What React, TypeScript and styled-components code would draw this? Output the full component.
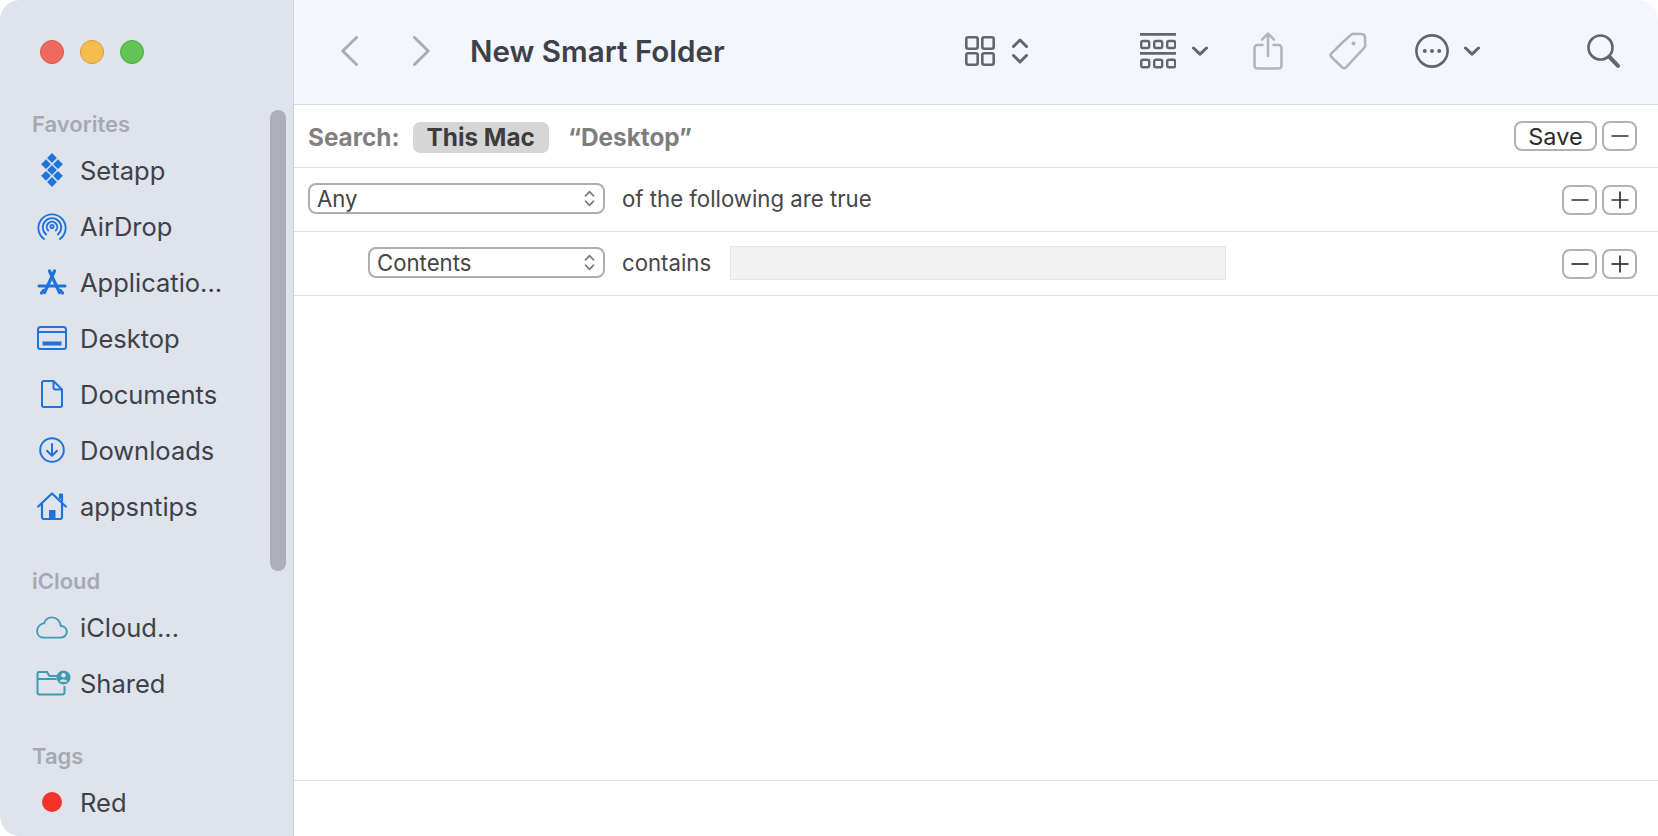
import React from 'react';
import styled, { createGlobalStyle } from 'styled-components';

const GlobalStyle = createGlobalStyle`
  html, body {
    margin: 0;
    padding: 0;
    height: 100%;
    background: #ffffff;
    overflow: hidden;
  }
  #root {
    height: 100%;
  }
`;

const BLUE = '#1f74dc';
const TEAL = '#3e9bb2';
const DARK = '#63666d';
const MUTED = '#b1b4bb';

const Chevron = ({ dir, color = DARK, width = 3 }: { dir: 'left' | 'right' | 'down'; color?: string; width?: number }) => {
  if (dir === 'down') {
    return (
      <svg width="16" height="10" viewBox="0 0 16 10" fill="none">
        <path d="M1.5 2 L8 8.2 L14.5 2" stroke={color} strokeWidth={width} strokeLinecap="round" strokeLinejoin="round" />
      </svg>
    );
  }
  return (
    <svg width="17" height="30" viewBox="0 0 17 30" fill="none">
      <path d={dir === 'left' ? 'M15.5 1.5 L1.8 15 L15.5 28.5' : 'M1.5 1.5 L15.2 15 L1.5 28.5'} stroke={color} strokeWidth={width} strokeLinecap="round" strokeLinejoin="round" />
    </svg>
  );
};

const GridIcon = () => (
  <svg width="30" height="30" viewBox="0 0 30 30" fill="none" stroke={DARK} strokeWidth="2.6">
    <rect x="1.3" y="1.3" width="11.4" height="11.4" rx="2" />
    <rect x="17.3" y="1.3" width="11.4" height="11.4" rx="2" />
    <rect x="1.3" y="17.3" width="11.4" height="11.4" rx="2" />
    <rect x="17.3" y="17.3" width="11.4" height="11.4" rx="2" />
  </svg>
);

const UpDownIcon = () => (
  <svg width="16" height="26" viewBox="0 0 16 26" fill="none" stroke={DARK} strokeWidth="3" strokeLinecap="round" strokeLinejoin="round">
    <path d="M1.5 8.5 L8 2 L14.5 8.5" />
    <path d="M1.5 17.5 L8 24 L14.5 17.5" />
  </svg>
);

const GroupIcon = () => (
  <svg width="36" height="36" viewBox="0 0 36 36" fill="none" stroke={DARK}>
    <path d="M0 1.4 H36 M0 20.4 H36" strokeWidth="2.6" />
    {[0, 13, 26].map((x) => (
      <React.Fragment key={x}>
        <rect x={x + 1.2} y="8" width="8" height="7" rx="1.8" strokeWidth="2.4" />
        <rect x={x + 1.2} y="26.8" width="8" height="7.4" rx="1.8" strokeWidth="2.4" />
      </React.Fragment>
    ))}
  </svg>
);

const ShareIcon = () => (
  <svg width="30" height="38" viewBox="0 0 30 38" fill="none" stroke={MUTED} strokeWidth="2.6" strokeLinecap="round" strokeLinejoin="round">
    <path d="M9.5 13 H4.5 A3 3 0 0 0 1.5 16 V33.5 A3 3 0 0 0 4.5 36.5 H25.5 A3 3 0 0 0 28.5 33.5 V16 A3 3 0 0 0 25.5 13 H20.5" />
    <path d="M15 24 V2 M9.2 7.5 L15 1.6 L20.8 7.5" />
  </svg>
);

const TagIcon = () => (
  <svg width="38" height="38" viewBox="0 0 38 38" fill="none" stroke={MUTED} strokeWidth="2.6" strokeLinejoin="round">
    <path d="M14 10 L22.5 2.6 A3 3 0 0 1 24.5 1.8 L32.5 2 A3.5 3.5 0 0 1 36 5.5 L36.2 13.5 A3 3 0 0 1 35.4 15.6 L17 35.4 A2.6 2.6 0 0 1 13.3 35.5 L2.5 25 A2.6 2.6 0 0 1 2.5 21.4 Z" />
    <circle cx="24.5" cy="11.5" r="2" fill={MUTED} stroke="none" />
  </svg>
);

const MoreIcon = () => (
  <svg width="34" height="34" viewBox="0 0 34 34" fill="none">
    <circle cx="17" cy="17" r="15.6" stroke={DARK} strokeWidth="2.6" />
    <circle cx="9.8" cy="17" r="2" fill={DARK} />
    <circle cx="17" cy="17" r="2" fill={DARK} />
    <circle cx="24.2" cy="17" r="2" fill={DARK} />
  </svg>
);

const SearchIcon = () => (
  <svg width="33" height="34" viewBox="0 0 33 34" fill="none" stroke={DARK} strokeLinecap="round">
    <circle cx="13.5" cy="13.5" r="12" strokeWidth="2.7" />
    <path d="M22.5 23 L31 31.8" strokeWidth="4" />
  </svg>
);

const SetappIcon = () => (
  <svg width="24" height="34" viewBox="0 0 24 34" fill={BLUE}>
    {[
      [12, 5],
      [6, 11.2],
      [18, 11.2],
      [12, 17],
      [6, 22.8],
      [18, 22.8],
      [12, 29],
    ].map(([x, y]) => (
      <path key={`${x}-${y}`} d={`M${x} ${y - 4.9} L${x + 4.9} ${y} L${x} ${y + 4.9} L${x - 4.9} ${y} Z`} />
    ))}
  </svg>
);

const AirDropIcon = () => (
  <svg width="30" height="30" viewBox="0 0 30 30" fill="none" stroke={BLUE} strokeWidth="1.9" strokeLinecap="round">
    <path d="M7 28 A13.6 13.6 0 1 1 23 28" />
    <path d="M9.2 23.5 A9.2 9.2 0 1 1 20.8 23.5" />
    <path d="M11.2 19.5 A5.2 5.2 0 1 1 18.8 19.5" />
    <circle cx="15" cy="15.5" r="1.6" />
  </svg>
);

const AppsIcon = () => (
  <svg width="30" height="26" viewBox="0 0 30 26" fill="none" stroke={BLUE} strokeWidth="3.2" strokeLinecap="round">
    <path d="M12.5 2 L22.5 23.5" />
    <path d="M17.5 2 L7.5 23.5" />
    <path d="M2 17 H28" strokeWidth="3" />
    <path d="M4.5 24 L6.5 21.5" />
    <path d="M25.5 24 L23.5 21.5" />
  </svg>
);

const DesktopIcon = () => (
  <svg width="30" height="24" viewBox="0 0 30 24" fill="none" stroke={BLUE} strokeWidth="2">
    <rect x="1" y="1" width="28" height="22" rx="2.5" />
    <path d="M1 6 H29" />
    <rect x="5.5" y="15.5" width="19" height="4" fill={BLUE} stroke="none" />
  </svg>
);

const DocumentIcon = () => (
  <svg width="22" height="28" viewBox="0 0 22 28" fill="none" stroke={BLUE} strokeWidth="2" strokeLinejoin="round">
    <path d="M3 1 H12.5 L21 9.5 V25 A2 2 0 0 1 19 27 H3 A2 2 0 0 1 1 25 V3 A2 2 0 0 1 3 1 Z" />
    <path d="M12.5 1 V7.5 A2 2 0 0 0 14.5 9.5 H21" />
  </svg>
);

const DownloadIcon = () => (
  <svg width="26" height="26" viewBox="0 0 26 26" fill="none" stroke={BLUE} strokeWidth="2" strokeLinecap="round" strokeLinejoin="round">
    <circle cx="13" cy="13" r="11.8" />
    <path d="M13 7 V18.5 M8 13.8 L13 18.8 L18 13.8" />
  </svg>
);

const HomeIcon = () => (
  <svg width="30" height="28" viewBox="0 0 30 28" fill="none" stroke={BLUE} strokeWidth="2.2" strokeLinecap="round" strokeLinejoin="round">
    <path d="M1.2 14.5 L15 1.5 L28.8 14.5" />
    <path d="M23 6 V2.5 H25 V9" />
    <path d="M5 11.5 V25 A2 2 0 0 0 7 27 H23 A2 2 0 0 0 25 25 V11.5" />
    <rect x="12" y="18" width="6.5" height="9" fill={BLUE} stroke="none" />
  </svg>
);

const CloudIcon = () => (
  <svg width="32" height="23" viewBox="0 0 34 24" fill="none" stroke={TEAL} strokeWidth="2" strokeLinejoin="round">
    <path d="M8.5 22.8 H25.5 C29.8 22.8 32.8 20 32.8 16.5 C32.8 13 30 10.4 26.4 10.4 C25.4 5 21.8 1.2 16.8 1.2 C12.8 1.2 10 3.6 8.8 7.2 C4.6 8.2 1.2 11.6 1.2 15.6 C1.2 19.8 4.2 22.8 8.5 22.8 Z" />
  </svg>
);

const SharedIcon = () => (
  <svg width="38" height="26" viewBox="-3.5 0 38 26" fill="none" stroke={TEAL} strokeWidth="2">
    <path d="M22 6 H13 L10.5 2 H3 A2 2 0 0 0 1 4 V22.5 A2 2 0 0 0 3 24.5 H26 A2 2 0 0 0 28 22.5 V16" />
    <path d="M1 9 H20" />
    <circle cx="27" cy="7.5" r="7" fill={TEAL} stroke="none" />
    <circle cx="27" cy="5.3" r="2.2" fill="#dfe3eb" stroke="none" />
    <path d="M23 11.8 A4.2 3.6 0 0 1 31 11.8 Z" fill="#dfe3eb" stroke="none" />
  </svg>
);

const SelectArrows = () => (
  <svg width="11" height="17" viewBox="0 0 11 17" fill="none" stroke="#7d7d7d" strokeWidth="1.8" strokeLinecap="round" strokeLinejoin="round">
    <path d="M1.5 5.8 L5.5 1.6 L9.5 5.8" />
    <path d="M1.5 11.2 L5.5 15.4 L9.5 11.2" />
  </svg>
);

const Window = styled.div`
  display: flex;
  height: 836px;
  width: 1658px;
  font-family: Inter, 'Noto Sans', 'Liberation Sans', sans-serif;
  background: #ffffff;
  border-radius: 20px;
  overflow: hidden;
`;

const Sidebar = styled.aside`
  position: relative;
  box-sizing: border-box;
  width: 294px;
  flex: none;
  padding: 0 0 0 32px;
  background: #dfe3eb;
  border-right: 1px solid #cfd2d9;
`;

const TrafficLights = styled.div`
  display: flex;
  gap: 16px;
  padding: 40px 0 0 8px;
  margin-bottom: 47px;
`;

const Light = styled.span<{ $fill: string; $edge: string }>`
  box-sizing: border-box;
  width: 24px;
  height: 24px;
  border-radius: 50%;
  background: ${(p) => p.$fill};
  border: 1px solid ${(p) => p.$edge};
`;

const SectionTitle = styled.div<{ $gap?: number }>`
  height: 26px;
  line-height: 26px;
  margin-top: ${(p) => p.$gap ?? 0}px;
  margin-bottom: 5px;
  font-size: 22px;
  font-weight: 600;
  color: #a6a9b1;
`;

const SideItem = styled.div`
  display: flex;
  align-items: center;
  height: 56px;
  font-size: 25.5px;
  color: #3e4148;
`;

const IconSlot = styled.span`
  display: flex;
  align-items: center;
  justify-content: center;
  width: 39px;
  margin-right: 9px;
  flex: none;
`;

const TagDot = styled.span`
  width: 20px;
  height: 20px;
  border-radius: 50%;
  background: #f5312c;
`;

const Scrollbar = styled.div`
  position: absolute;
  top: 110px;
  left: 270px;
  width: 16px;
  height: 461px;
  border-radius: 8px;
  background: #aeafb8;
`;

const Main = styled.main`
  flex: 1;
  display: flex;
  flex-direction: column;
  min-width: 0;
`;

const Toolbar = styled.header`
  display: flex;
  align-items: center;
  box-sizing: border-box;
  height: 105px;
  padding: 0 38px 2px 47px;
  background: #f3f6fd;
  border-bottom: 1px solid #d9d9dc;
`;

const ToolSlot = styled.span<{ $left?: number }>`
  display: flex;
  align-items: center;
  flex: none;
  margin-left: ${(p) => p.$left ?? 0}px;
`;

const Title = styled.h1`
  margin: 0 0 0 40px;
  width: 255px;
  flex: none;
  font-size: 29.6px;
  font-weight: 600;
  color: #3e4248;
  white-space: nowrap;
`;

const Row = styled.div<{ $indent?: number; $height: number }>`
  display: flex;
  align-items: center;
  box-sizing: border-box;
  height: ${(p) => p.$height}px;
  padding: 0 21px 0 ${(p) => p.$indent ?? 14}px;
  border-bottom: 1px solid #dfdfdf;
`;

const ScopeLabel = styled.span`
  font-size: 24.3px;
  font-weight: 700;
  color: #808080;
  margin: 2px 13px 0 0;
`;

const ScopePill = styled.span<{ $active?: boolean }>`
  display: flex;
  align-items: center;
  height: 31px;
  padding: 0 14px;
  border-radius: 7px;
  font-size: 24.3px;
  font-weight: 700;
  color: ${(p) => (p.$active ? '#3d3d3d' : '#7d7d7d')};
  background: ${(p) => (p.$active ? '#d6d6d6' : 'transparent')};
  margin: 2px 5px 0 0;
`;

const Select = styled.div<{ $width: number }>`
  display: flex;
  align-items: center;
  justify-content: space-between;
  box-sizing: border-box;
  width: ${(p) => p.$width}px;
  height: 31px;
  margin-bottom: 2px;
  padding: 0 8px 0 7px;
  border: 2px solid #adadad;
  border-radius: 8px;
  font-size: 22.2px;
  color: #454545;
`;

const RowText = styled.span`
  margin: 0 0 2px 17px;
  font-size: 22.2px;
  color: #474747;
`;

const ValueInput = styled.div`
  box-sizing: border-box;
  width: 496px;
  height: 34px;
  margin: 0 0 2px 19px;
  background: #f2f2f2;
  border: 1px solid #e6e6e6;
`;

const Actions = styled.div`
  display: flex;
  gap: 5px;
  margin-left: auto;
`;

const RoundButton = styled.div<{ $wide?: boolean }>`
  display: flex;
  align-items: center;
  justify-content: center;
  box-sizing: border-box;
  width: ${(p) => (p.$wide ? 83 : 35)}px;
  height: 30px;
  border: 2px solid #b0b0b0;
  border-radius: 8px;
  font-size: 23.5px;
  color: #2c2c2c;
`;

const Glyph = ({ plus }: { plus?: boolean }) => (
  <svg width="20" height="20" viewBox="0 0 20 20" stroke="#2e2e2e" strokeWidth="1.7">
    <path d="M1.5 10 H18.5" />
    {plus && <path d="M10 1.5 V18.5" />}
  </svg>
);

const Spacer = styled.div`
  flex: 1;
`;

const Footer = styled.footer`
  height: 55px;
  flex: none;
  border-top: 1px solid #dfdfdf;
`;

const favorites = [
  { label: 'Setapp', icon: <SetappIcon /> },
  { label: 'AirDrop', icon: <AirDropIcon /> },
  { label: 'Applicatio...', icon: <AppsIcon /> },
  { label: 'Desktop', icon: <DesktopIcon /> },
  { label: 'Documents', icon: <DocumentIcon /> },
  { label: 'Downloads', icon: <DownloadIcon /> },
  { label: 'appsntips', icon: <HomeIcon /> },
];

const AddRemove = () => (
  <Actions>
    <RoundButton>
      <Glyph />
    </RoundButton>
    <RoundButton>
      <Glyph plus />
    </RoundButton>
  </Actions>
);

const App = () => (
  <>
    <GlobalStyle />
    <Window>
      <Sidebar>
        <TrafficLights>
          <Light $fill="#ee6a5f" $edge="#d1564b" />
          <Light $fill="#f5bd4f" $edge="#d69e3a" />
          <Light $fill="#61c454" $edge="#4ea642" />
        </TrafficLights>
        <SectionTitle>Favorites</SectionTitle>
        {favorites.map((item) => (
          <SideItem key={item.label}>
            <IconSlot>{item.icon}</IconSlot>
            {item.label}
          </SideItem>
        ))}
        <SectionTitle $gap={34}>iCloud</SectionTitle>
        <SideItem>
          <IconSlot>
            <CloudIcon />
          </IconSlot>
          iCloud...
        </SideItem>
        <SideItem>
          <IconSlot>
            <SharedIcon />
          </IconSlot>
          Shared
        </SideItem>
        <SectionTitle $gap={32}>Tags</SectionTitle>
        <SideItem>
          <IconSlot>
            <TagDot />
          </IconSlot>
          Red
        </SideItem>
        <Scrollbar />
      </Sidebar>
      <Main>
        <Toolbar>
          <ToolSlot>
            <Chevron dir="left" color="#a9adb3" />
          </ToolSlot>
          <ToolSlot $left={55}>
            <Chevron dir="right" color="#a9adb3" />
          </ToolSlot>
          <Title>New Smart Folder</Title>
          <ToolSlot $left={240}>
            <GridIcon />
          </ToolSlot>
          <ToolSlot $left={17}>
            <UpDownIcon />
          </ToolSlot>
          <ToolSlot $left={112}>
            <GroupIcon />
          </ToolSlot>
          <ToolSlot $left={16}>
            <Chevron dir="down" />
          </ToolSlot>
          <ToolSlot $left={45}>
            <ShareIcon />
          </ToolSlot>
          <ToolSlot $left={46}>
            <TagIcon />
          </ToolSlot>
          <ToolSlot $left={48}>
            <MoreIcon />
          </ToolSlot>
          <ToolSlot $left={15}>
            <Chevron dir="down" />
          </ToolSlot>
          <ToolSlot $left={107}>
            <SearchIcon />
          </ToolSlot>
        </Toolbar>
        <Row $height={63}>
          <ScopeLabel>Search:</ScopeLabel>
          <ScopePill $active>This Mac</ScopePill>
          <ScopePill>“Desktop”</ScopePill>
          <Actions>
            <RoundButton $wide>Save</RoundButton>
            <RoundButton>
              <Glyph />
            </RoundButton>
          </Actions>
        </Row>
        <Row $height={64}>
          <Select $width={297}>
            Any
            <SelectArrows />
          </Select>
          <RowText>of the following are true</RowText>
          <AddRemove />
        </Row>
        <Row $height={64} $indent={74}>
          <Select $width={237}>
            Contents
            <SelectArrows />
          </Select>
          <RowText>contains</RowText>
          <ValueInput />
          <AddRemove />
        </Row>
        <Spacer />
        <Footer />
      </Main>
    </Window>
  </>
);

export default App;
